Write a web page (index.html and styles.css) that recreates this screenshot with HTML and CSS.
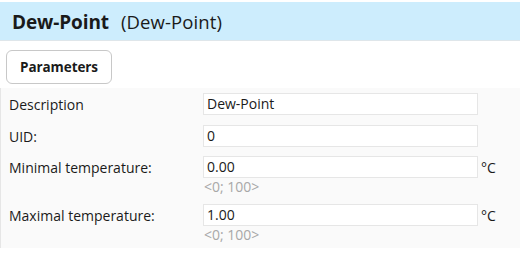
FILE: index.html
```html
<!DOCTYPE html>
<html>
<head>
<meta charset="utf-8">
<link rel="stylesheet" href="styles.css">
</head>
<body>
<div class="header">
  <span class="title">Dew-Point</span>
  <span class="subtitle">(Dew-Point)</span>
</div>
<div class="tabs">
  <div class="tab">Parameters</div>
</div>
<div class="form">
  <div class="row first">
    <div class="label">Description</div>
    <div class="field"><div class="input">Dew-Point</div></div>
    <div class="unit"></div>
  </div>
  <div class="row">
    <div class="label">UID:</div>
    <div class="field"><div class="input">0</div></div>
    <div class="unit"></div>
  </div>
  <div class="row">
    <div class="label">Minimal temperature:</div>
    <div class="field"><div class="input">0.00</div><div class="range">&lt;0; 100&gt;</div></div>
    <div class="unit">°C</div>
  </div>
  <div class="row">
    <div class="label">Maximal temperature:</div>
    <div class="field"><div class="input">1.00</div><div class="range">&lt;0; 100&gt;</div></div>
    <div class="unit">°C</div>
  </div>
</div>
</body>
</html>
```
FILE: styles.css
```css
html, body {
  margin: 0;
  padding: 0;
  background: #ffffff;
  font-family: "Open Sans", "Noto Sans", sans-serif;
  color: #1a1a1a;
}
.header {
  margin-top: 2px;
  background: #cdedfd;
  border-bottom: 1px solid #dfe6ea;
  display: flex;
  align-items: center;
  padding: 1px 0 0 12px;
  box-sizing: border-box;
  height: 39px;
}
.title {
  font-weight: 700;
  font-size: 19px;
  letter-spacing: -0.1px;
  margin-right: 12px;
}
.subtitle {
  font-size: 18.5px;
  letter-spacing: 0.1px;
}
.tabs {
  padding: 9px 0 0 6px;
}
.tab {
  display: inline-flex;
  align-items: center;
  justify-content: center;
  width: 106px;
  height: 34px;
  box-sizing: border-box;
  border: 1px solid #c8c8c8;
  border-radius: 6px;
  font-weight: 700;
  font-size: 13.5px;
  letter-spacing: -0.1px;
  background: #ffffff;
}
.form {
  margin-top: 4px;
  background: #fafafa;
  border-left: 1px solid #e6e6e6;
  padding: 5px 0 0 8px;
  height: 160px;
  box-sizing: border-box;
}
.row {
  display: grid;
  grid-template-columns: 194px 275px 30px;
  margin-bottom: 9px;
}
.row.first {
  margin-bottom: 10px;
}
.label {
  font-size: 14px;
  line-height: 20px;
  padding-top: 2px;
  letter-spacing: 0;
}
.input {
  height: 22px;
  box-sizing: border-box;
  border: 1px solid #e6e6e6;
  background: #ffffff;
  font-size: 14px;
  line-height: 20px;
  padding-left: 3px;
}
.range {
  font-size: 14px;
  color: #a8a8a8;
  line-height: 17px;
  padding-left: 1px;
}
.unit {
  font-size: 14px;
  line-height: 20px;
  padding-left: 3px;
  padding-top: 2px;
}
```
